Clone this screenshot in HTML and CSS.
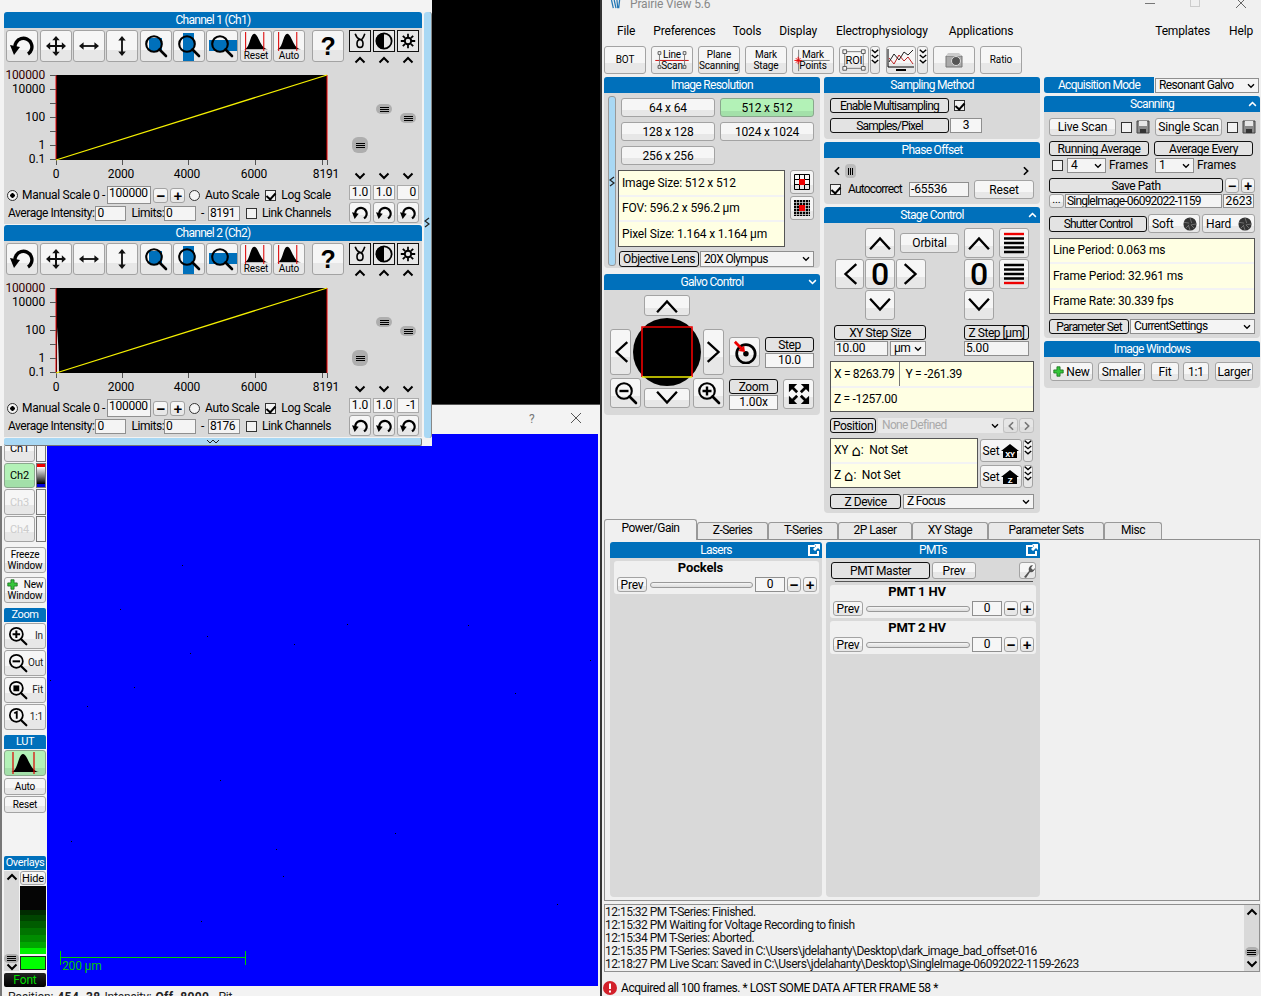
FILE: index.html
```html
<!DOCTYPE html>
<html lang="en">
<head>
<meta charset="utf-8">
<title>Prairie View 5.6</title>
<link rel="stylesheet" href="styles.css">
</head>
<body>
<svg class="defs" width="0" height="0" aria-hidden="true">
  <symbol id="rot" viewBox="0 0 24 24"><path d="M18 20a8.5 8.5 0 1 0-13-6" fill="none" stroke="#000" stroke-width="3.4"/><path d="M0 11l10 2-6 8z"/></symbol>
  <symbol id="move" viewBox="0 0 24 24"><path d="M12 2v20M2 12h20" stroke="#111" stroke-width="2.4" fill="none"/><path d="M12 0l4.500 5h-9zM12 24l4.500-5h-9zM0 12l5-4.500v9zM24 12l-5-4.500v9z" fill="#111"/></symbol>
  <symbol id="lr" viewBox="0 0 24 24"><path d="M3 12h18" stroke="#111" stroke-width="2.200"/><path d="M0 12l5.500-4.500v9zM24 12l-5.500-4.500v9z" fill="#111"/></symbol>
  <symbol id="ud" viewBox="0 0 24 24"><path d="M12 3v18" stroke="#111" stroke-width="2.200"/><path d="M12 0l4.500 5.500h-9zM12 24l4.500-5.500h-9z" fill="#111"/></symbol>
  <symbol id="lens" viewBox="0 0 24 24"><circle cx="10" cy="10" r="7.800" fill="none" stroke="#000" stroke-width="2.100"/><path d="M15.500 15.500l6.500 6.500" stroke="#000" stroke-width="2.600" stroke-linecap="round"/></symbol>
  <symbol id="zin" viewBox="0 0 24 24"><use href="#lens"/><path d="M5.500 10h9M10 5.500v9" stroke="#000" stroke-width="2.400"/></symbol>
  <symbol id="zout" viewBox="0 0 24 24"><use href="#lens"/><path d="M5.500 10h9" stroke="#000" stroke-width="2.400"/></symbol>
  <symbol id="zfit" viewBox="0 0 24 24"><use href="#lens"/><rect x="6.500" y="6.500" width="7" height="7"/></symbol>
  <symbol id="z11" viewBox="0 0 24 24"><use href="#lens"/><path d="M7.500 7.500l3-1.500v8" fill="none" stroke="#000" stroke-width="2.200"/></symbol>
  <symbol id="hist" viewBox="0 0 30 22"><path d="M1 20C8 20 8 2 13 2s7 18 16 18z"/><path d="M3 0v22M24 0v22" stroke="#d00" stroke-width="1.200"/></symbol>
  <symbol id="gam" viewBox="0 0 20 20"><path d="M4 1c2 6 4 6 6 7s4-1 6-7M10 8c-5 1-5 10 0 10s5-9 0-10z" fill="none" stroke="#000" stroke-width="2"/></symbol>
  <symbol id="half" viewBox="0 0 20 20"><circle cx="10" cy="10" r="8.500" fill="none" stroke="#000" stroke-width="2"/><path d="M10 1a9 9 0 0 0 0 18z"/></symbol>
  <symbol id="sun" viewBox="0 0 20 20"><circle cx="10" cy="10" r="4" fill="none" stroke="#000" stroke-width="2.400"/><path d="M10 1v4M10 15v4M1 10h4M15 10h4M3.500 3.500l3 3M13.500 13.500l3 3M16.500 3.500l-3 3M6.500 13.500l-3 3" stroke="#000" stroke-width="2.200"/></symbol>
  <symbol id="cu" viewBox="0 0 12 8"><path d="M1.500 6.500L6 2l4.500 4.500" fill="none" stroke="#000" stroke-width="2"/></symbol>
  <symbol id="cd" viewBox="0 0 12 8"><path d="M1.500 1.500L6 6l4.500-4.500" fill="none" stroke="#000" stroke-width="2"/></symbol>
  <symbol id="cl" viewBox="0 0 8 12"><path d="M6.500 1.500L2 6l4.500 4.500" fill="none" stroke="#000" stroke-width="2"/></symbol>
  <symbol id="cr" viewBox="0 0 8 12"><path d="M1.500 1.500L6 6l-4.500 4.500" fill="none" stroke="#000" stroke-width="2"/></symbol>
  <symbol id="big-u" viewBox="0 0 28 20"><path d="M3 17L14 5l11 12" fill="none" stroke="#000" stroke-width="2.600"/></symbol>
  <symbol id="big-d" viewBox="0 0 28 20"><path d="M3 3l11 12L25 3" fill="none" stroke="#000" stroke-width="2.600"/></symbol>
  <symbol id="big-l" viewBox="0 0 20 28"><path d="M17 3L5 14l12 11" fill="none" stroke="#000" stroke-width="2.600"/></symbol>
  <symbol id="big-r" viewBox="0 0 20 28"><path d="M3 3l12 11L3 25" fill="none" stroke="#000" stroke-width="2.600"/></symbol>
  <symbol id="lines-t" viewBox="0 0 24 24"><path d="M2 3h20" stroke="#e00" stroke-width="2.400"/><path d="M2 7.500h20M2 12h20M2 16.500h20M2 21h20" stroke="#000" stroke-width="2.400"/></symbol>
  <symbol id="lines-b" viewBox="0 0 24 24"><path d="M2 3h20M2 7.500h20M2 12h20M2 16.500h20" stroke="#000" stroke-width="2.400"/><path d="M2 21h20" stroke="#e00" stroke-width="2.400"/></symbol>
  <symbol id="tri" viewBox="0 0 10 26"><path d="M1.500 2L5 5l3.500-3M1.500 7.500L5 10.500l3.500-3M1.500 13L5 16l3.500-3" fill="none" stroke="#000" stroke-width="1.500"/></symbol>
  <symbol id="plus" viewBox="0 0 14 14"><path d="M5 1h4v4h4v4H9v4H5V9H1V5h4z" fill="#35c63a" stroke="#1a6d1d"/></symbol>
  <symbol id="save" viewBox="0 0 14 14"><path d="M1 1h12v12H1z" fill="#8a8a8a" stroke="#444"/><path d="M3 1h8v5H3z" fill="#e6e6e6"/><path d="M4 9h6v4H4z" fill="#333"/></symbol>
  <symbol id="shut" viewBox="0 0 16 16"><circle cx="8" cy="8" r="7.500" fill="#333"/><path d="M8 1l2 6M15 8l-6 1M8 15L6 9M1 6l6 1M3 13l4-4M13 13L9 9" stroke="#777" fill="none"/></symbol>
  <symbol id="grid1" viewBox="0 0 16 16"><path d="M.5.500h15v15H.500zM5.500.500v15M10.500.500v15M.500 5.500h15M.500 10.500h15" fill="none" stroke="#000"/><rect x="5" y="5" width="6" height="6" fill="#e00"/></symbol>
  <symbol id="grid2" viewBox="0 0 16 16"><rect width="16" height="16"/><path d="M2.500 0v16M5.500 0v16M8.500 0v16M11.500 0v16M14.500 0v16M0 2.500h16M0 5.500h16M0 8.500h16M0 11.500h16M0 14.500h16" stroke="#ddd" stroke-width=".7"/><rect x="5" y="5" width="6" height="6" fill="#e00"/></symbol>
  <symbol id="full" viewBox="0 0 24 24"><path d="M1 1h9L1 10zM23 1v9l-9-9zM1 23v-9l9 9zM23 23h-9l9-9z"/><path d="M4 4l6 6M20 4l-6 6M4 20l6-6M20 20l-6-6" stroke="#000" stroke-width="3"/></symbol>
  <symbol id="target" viewBox="0 0 26 26"><circle cx="14" cy="15" r="10" fill="none" stroke="#000" stroke-width="3"/><circle cx="14" cy="15" r="3"/><path d="M2 2l9 9" stroke="#e00" stroke-width="3"/><path d="M13 13l-1-7-6 6z" fill="#e00"/></symbol>
  <symbol id="wrench" viewBox="0 0 14 14"><path d="M3 13l5-6c-1-3 1-6 4-6l-2 3 2 2 2-2c0 3-3 5-5 4l-4 6z" fill="#555"/></symbol>
  <symbol id="pop" viewBox="0 0 14 14"><path d="M1 2h7v2H3v7h7V8h2v5H1z" fill="#fff"/><path d="M7 1h6v6l-2-2-3 3-2-2 3-3z" fill="#fff"/></symbol>
  <symbol id="cdw" viewBox="0 0 12 8"><path d="M1.500 1.500L6 6l4.500-4.500" fill="none" stroke="#fff" stroke-width="2"/></symbol>
  <symbol id="cuw" viewBox="0 0 12 8"><path d="M1.500 6.500L6 2l4.500 4.500" fill="none" stroke="#fff" stroke-width="2"/></symbol>
</svg>

<div class="desk">
  <section class="imgwin">
    <div class="wintitle"><span class="wq">?</span><svg class="wx" viewBox="0 0 10 10"><path d="M0 0l10 10M10 0L0 10" stroke="#555" fill="none"/></svg></div>
    <div class="imgbody">
      <aside class="tools">
        <div class="chrow h28"><div class="btn t11 flat w31 ch1">Ch1</div><div class="swatch"></div></div>
        <div class="chrow h25"><div class="btn t11 on w31">Ch2</div><div class="swatch lut"></div></div>
        <div class="chrow h26 off"><div class="btn t11 w31">Ch3</div><div class="swatch"></div></div>
        <div class="chrow h26 off"><div class="btn t11 w31">Ch4</div><div class="swatch"></div></div>
        <div class="btn t10 tw mt4 h26 stack"><span>Freeze</span><span>Window</span></div>
        <div class="btn t10 tw mt4 h26 stack"><span class="newl"><svg class="i11"><use href="#plus"/></svg>New</span><span>Window</span></div>
        <div class="thead mt5">Zoom</div>
        <div class="btn tw h26 zbtn mt1"><svg class="i20"><use href="#zin"/></svg><span>In</span></div>
        <div class="btn tw h26 zbtn mt1"><svg class="i20"><use href="#zout"/></svg><span>Out</span></div>
        <div class="btn tw h26 zbtn mt1"><svg class="i20"><use href="#zfit"/></svg><span>Fit</span></div>
        <div class="btn tw h26 zbtn mt1"><svg class="i20"><use href="#z11"/></svg><span>1:1</span></div>
        <div class="thead mt5">LUT</div>
        <div class="btn on tw h26 mt1"><svg class="lutic"><use href="#hist"/></svg></div>
        <div class="btn t10 tw h17 mt2">Auto</div>
        <div class="btn t10 tw h17 mt1">Reset</div>
        <div class="thead over">Overlays</div>
        <div class="ovl">
          <div class="ovbar">
            <svg class="i9 ovup"><use href="#cu"/></svg>
            <div class="thumb tsm ovthumb"><i></i><i></i><i></i></div>
            <svg class="i9"><use href="#cd"/></svg>
          </div>
          <div class="ovcol">
            <div class="btn t11 hide">Hide</div>
            <div class="ramp"></div>
            <div class="grn"></div>
          </div>
        </div>
        <div class="fontbtn">Font</div>
      </aside>
      <div class="canvas">
        <svg class="specks" viewBox="0 0 551 552"><path d="M135 131h1v1h-1zM73 175h1v1h-1zM160 202h1v1h-1zM247 210h1v1h-1zM143 219h1v1h-1zM3 246h1v1H3zM87 253h1v1h-1zM40 272h1v1h-1zM173 346h1v1h-1zM24 407h1v1h-1zM229 415h1v1h-1zM236 442h1v1h-1zM154 487h1v1h-1zM468 259h1v1h-1zM421 191h1v1h-1zM348 399h1v1h-1zM543 226h1v1h-1zM300 190h1v1h-1zM510 470h1v1h-1z" fill="#000"/></svg>
        <div class="scalebar"><span>200 µm</span></div>
      </div>
    </div>
    <div class="imgstatus"><span>Position:</span><b>454, 38</b><span>Intensity:</span><b>Off, 8000</b><span class="pit">Pit</span></div>
  </section>

  <section class="chanwin">
    <div class="chanmain">
      <article class="chan">
        <div class="phead">Channel 1 (Ch1)</div>
        <div class="chbody">
          <div class="chleft">
            <div class="tb">
              <div class="btn b32"><svg class="i24"><use href="#rot"/></svg></div>
              <div class="btn b32 ml1"><svg class="i20"><use href="#move"/></svg></div>
              <div class="btn b32"><svg class="i20"><use href="#lr"/></svg></div>
              <div class="btn b32"><svg class="i20"><use href="#ud"/></svg></div>
              <div class="btn b32 zs sq ml1"><svg class="i24"><use href="#lens"/></svg></div>
              <div class="btn b32 zs vb"><svg class="i24"><use href="#lens"/></svg></div>
              <div class="btn b32 zs hb"><svg class="i24"><use href="#lens"/></svg></div>
              <div class="btn b32 histb ml1"><svg class="i-h"><use href="#hist"/></svg><span>Reset</span></div>
              <div class="btn b32 histb"><svg class="i-h"><use href="#hist"/></svg><span>Auto</span></div>
              <div class="btn b32 qbtn ml6">?</div>
            </div>
            <svg class="plot" viewBox="0 0 345 124">
              <rect x="52" y="13" width="271" height="85"/>
              <path d="M52 13v85M323 13v85" stroke="#e00" fill="none"/>
              <path d="M46 13.500h6M46 27.500h6M46 41.500h6M46 55.500h6M46 69.500h6M46 83.500h6M46 97.500h6M52.500 98v5M118.500 98v5M184.500 98v5M251.500 98v5M318.500 98v5M323.500 98v5" stroke="#555" fill="none"/>
              <path d="M52 98L323 13" stroke="#f5f000" stroke-width="1.300"/>
              <g class="ylab"><text x="41" y="17">100000</text><text x="41" y="31">10000</text><text x="41" y="59">100</text><text x="41" y="87">1</text><text x="41" y="101">0.1</text></g>
              <g class="xlab"><text x="52" y="116">0</text><text x="117" y="116">2000</text><text x="183" y="116">4000</text><text x="250" y="116">6000</text><text x="322" y="116">8191</text></g>
            </svg>
            <div class="ctlrow r1">
              <span class="radio sel ml3"></span><span class="ml4">Manual Scale 0 -</span>
              <span class="inp w44 ml2 h18">100000</span>
              <div class="btn pm ml2">−</div><div class="btn pm ml2">+</div>
              <span class="radio ml4"></span><span class="ml5">Auto Scale</span>
              <span class="cb chk ml6"></span><span class="ml5">Log Scale</span>
            </div>
            <div class="ctlrow r2">
              <span class="ml4">Average Intensity:</span><span class="inp w31 ml1 h15">0</span>
              <span class="ml5">Limits:</span><span class="inp w32 h15">0</span>
              <span class="ml5">-</span><span class="inp w32 ml4 h15">8191</span>
              <span class="cb ml6"></span><span class="ml5">Link Channels</span>
            </div>
          </div>
          <div class="chright">
            <div class="mix">
              <div class="mbox"><svg class="i16"><use href="#gam"/></svg></div>
              <svg class="i12 arr"><use href="#cu"/></svg>
              <div class="track"><div class="thumb tbig t1"><i></i><i></i><i></i></div></div>
              <svg class="i12 arr"><use href="#cd"/></svg>
              <span class="mval">1.0</span>
              <div class="btn mrot"><svg class="i16"><use href="#rot"/></svg></div>
            </div>
            <div class="mix">
              <div class="mbox"><svg class="i18"><use href="#half"/></svg></div>
              <svg class="i12 arr"><use href="#cu"/></svg>
              <div class="track"><div class="thumb t2"><i></i><i></i><i></i></div></div>
              <svg class="i12 arr"><use href="#cd"/></svg>
              <span class="mval">1.0</span>
              <div class="btn mrot"><svg class="i16"><use href="#rot"/></svg></div>
            </div>
            <div class="mix">
              <div class="mbox"><svg class="i16"><use href="#sun"/></svg></div>
              <svg class="i12 arr"><use href="#cu"/></svg>
              <div class="track"><div class="thumb t3"><i></i><i></i><i></i></div></div>
              <svg class="i12 arr"><use href="#cd"/></svg>
              <span class="mval">0</span>
              <div class="btn mrot"><svg class="i16"><use href="#rot"/></svg></div>
            </div>
          </div>
        </div>
      </article>
      <article class="chan ch2">
        <div class="phead">Channel 2 (Ch2)</div>
        <div class="chbody">
          <div class="chleft">
            <div class="tb">
              <div class="btn b32"><svg class="i24"><use href="#rot"/></svg></div>
              <div class="btn b32 ml1"><svg class="i20"><use href="#move"/></svg></div>
              <div class="btn b32"><svg class="i20"><use href="#lr"/></svg></div>
              <div class="btn b32"><svg class="i20"><use href="#ud"/></svg></div>
              <div class="btn b32 zs sq ml1"><svg class="i24"><use href="#lens"/></svg></div>
              <div class="btn b32 zs vb"><svg class="i24"><use href="#lens"/></svg></div>
              <div class="btn b32 zs hb"><svg class="i24"><use href="#lens"/></svg></div>
              <div class="btn b32 histb ml1"><svg class="i-h"><use href="#hist"/></svg><span>Reset</span></div>
              <div class="btn b32 histb"><svg class="i-h"><use href="#hist"/></svg><span>Auto</span></div>
              <div class="btn b32 qbtn ml6">?</div>
            </div>
            <svg class="plot" viewBox="0 0 345 124">
              <rect x="52" y="13" width="271" height="85"/>
              <path d="M52 13v85M323 13v85" stroke="#e00" fill="none"/>
              <path d="M46 13.500h6M46 27.500h6M46 41.500h6M46 55.500h6M46 69.500h6M46 83.500h6M46 97.500h6M52.500 98v5M118.500 98v5M184.500 98v5M251.500 98v5M318.500 98v5M323.500 98v5" stroke="#555" fill="none"/>
              <path d="M53 98V52c1 14 2 28 2 46z" fill="#ddd"/>
              <path d="M52 98L323 13" stroke="#f5f000" stroke-width="1.300"/>
              <g class="ylab"><text x="41" y="17">100000</text><text x="41" y="31">10000</text><text x="41" y="59">100</text><text x="41" y="87">1</text><text x="41" y="101">0.1</text></g>
              <g class="xlab"><text x="52" y="116">0</text><text x="117" y="116">2000</text><text x="183" y="116">4000</text><text x="250" y="116">6000</text><text x="322" y="116">8191</text></g>
            </svg>
            <div class="ctlrow r1">
              <span class="radio sel ml3"></span><span class="ml4">Manual Scale 0 -</span>
              <span class="inp w44 ml2 h18">100000</span>
              <div class="btn pm ml2">−</div><div class="btn pm ml2">+</div>
              <span class="radio ml4"></span><span class="ml5">Auto Scale</span>
              <span class="cb chk ml6"></span><span class="ml5">Log Scale</span>
            </div>
            <div class="ctlrow r2">
              <span class="ml4">Average Intensity:</span><span class="inp w31 ml1 h15">0</span>
              <span class="ml5">Limits:</span><span class="inp w32 h15">0</span>
              <span class="ml5">-</span><span class="inp w32 ml4 h15">8176</span>
              <span class="cb ml6"></span><span class="ml5">Link Channels</span>
            </div>
          </div>
          <div class="chright">
            <div class="mix">
              <div class="mbox"><svg class="i16"><use href="#gam"/></svg></div>
              <svg class="i12 arr"><use href="#cu"/></svg>
              <div class="track"><div class="thumb tbig t1"><i></i><i></i><i></i></div></div>
              <svg class="i12 arr"><use href="#cd"/></svg>
              <span class="mval">1.0</span>
              <div class="btn mrot"><svg class="i16"><use href="#rot"/></svg></div>
            </div>
            <div class="mix">
              <div class="mbox"><svg class="i18"><use href="#half"/></svg></div>
              <svg class="i12 arr"><use href="#cu"/></svg>
              <div class="track"><div class="thumb t2"><i></i><i></i><i></i></div></div>
              <svg class="i12 arr"><use href="#cd"/></svg>
              <span class="mval">1.0</span>
              <div class="btn mrot"><svg class="i16"><use href="#rot"/></svg></div>
            </div>
            <div class="mix">
              <div class="mbox"><svg class="i16"><use href="#sun"/></svg></div>
              <svg class="i12 arr"><use href="#cu"/></svg>
              <div class="track"><div class="thumb t3"><i></i><i></i><i></i></div></div>
              <svg class="i12 arr"><use href="#cd"/></svg>
              <span class="mval">-1</span>
              <div class="btn mrot"><svg class="i16"><use href="#rot"/></svg></div>
            </div>
          </div>
        </div>
      </article>
      <div class="collapse"><svg viewBox="0 0 14 6" class="colic"><path d="M1 1l3 3 3-3 3 3 3-3" fill="none" stroke="#222"/></svg></div>
    </div>
    <div class="chscroll"><svg viewBox="0 0 6 12" class="scic"><path d="M5 1L1 4l4 3L1 10" fill="none" stroke="#222" stroke-width="1.200"/></svg></div>
  </section>

  <main class="app">
    <header class="title">
      <svg class="logo" viewBox="0 0 12 10"><path d="M1 0l2 9M4 0l2 9M7 0l1 9M10 0l-1 9" stroke="#2478b5" stroke-width="1.400"/></svg>
      <span class="ttext">Prairie View 5.6</span>
      <span class="wctl"><i class="wmin"></i><i class="wmax"></i><svg class="wclose" viewBox="0 0 10 10"><path d="M0 0l10 10M10 0L0 10" stroke="#666" fill="none"/></svg></span>
    </header>
    <nav class="menu">
      <span class="m1">File</span><span class="m2">Preferences</span><span class="m3">Tools</span><span class="m4">Display</span><span class="m5">Electrophysiology</span><span class="m6">Applications</span><span class="m7">Templates</span><span class="m8">Help</span>
    </nav>
    <div class="toolbar">
      <div class="btn w42 t10">BOT</div>
      <div class="btn w42 t10 stack ov"><svg class="tbov" viewBox="0 0 42 28"><path d="M3 14.500h36" stroke="#c00"/><path d="M6 5h3v3H6zM33 5h3v3h-3zM6 20h3v3H6zM33 20h3v3h-3z" fill="none" stroke="#555"/><path d="M7.500 8v12M34.500 8v12" stroke="#777"/></svg><span>Line</span><span>Scan</span></div>
      <div class="btn w42 t10 stack"><span>Plane</span><span>Scanning</span></div>
      <div class="btn w42 t10 stack"><span>Mark</span><span>Stage</span></div>
      <div class="btn w42 t10 stack ov"><svg class="tbov" viewBox="0 0 42 28"><path d="M6 14.500h33M5.500 3v23" stroke="#777"/><path d="M1 14.500h8M5 10.500v8M2.500 12l5 5M7.500 12l-5 5" stroke="#e00"/></svg><span>Mark</span><span>Points</span></div>
      <div class="btn w30 t11 ov"><svg class="tbov" viewBox="0 0 30 28"><path d="M5 5h20v18H5z" fill="none" stroke="#777"/><path d="M3 3h4v4H3zM23 3h4v4h-4zM3 21h4v4H3zM23 21h4v4h-4z" fill="#f3f3f3" stroke="#555"/></svg>ROI</div>
      <div class="btn w10 nm1"><svg class="i-tri"><use href="#tri"/></svg></div>
      <div class="btn w30 ml1"><svg class="chart" viewBox="0 0 28 24"><path d="M1 1v18h26" fill="none" stroke="#000"/><path d="M2 10l5 6 5-9 5 6 4-4 5 7" fill="none" stroke="#b22"/><path d="M2 14l5-8 5 6 5-8 4 3 5-5" fill="none" stroke="#222"/><path d="M9 22h10" stroke="#000" stroke-width="2"/></svg></div>
      <div class="btn w11 nm1"><svg class="i-tri"><use href="#tri"/></svg></div>
      <div class="btn w42"><svg class="cam" viewBox="0 0 18 16"><path d="M1 4h16v11H1z" fill="#aaa" stroke="#777"/><path d="M3 1h11l3 3H1z" fill="#ccc"/><circle cx="11" cy="9" r="4.500" fill="#555" stroke="#ddd"/></svg></div>
      <div class="btn w42 t10">Ratio</div>
    </div>

    <div class="cols">
      <div class="col">
        <div class="panel">
          <div class="phead">Image Resolution</div>
          <div class="pbody res">
            <div class="slimbar"><svg viewBox="0 0 6 12" class="scic2"><path d="M5 1L1 4l4 3L1 10" fill="none" stroke="#222" stroke-width="1.200"/></svg></div>
            <div class="rescontent">
              <div class="resgrid">
                <div class="btn">64 x 64</div><div class="btn on">512 x 512</div>
                <div class="btn">128 x 128</div><div class="btn">1024 x 1024</div>
                <div class="btn">256 x 256</div>
              </div>
              <div class="infoline">
                <div class="info w167">
                  <div>Image Size: 512 x 512</div><div>FOV: 596.2 x 596.2 µm</div><div>Pixel Size: 1.164 x 1.164 µm</div>
                </div>
                <div class="gridbtns">
                  <div class="btn"><svg class="i16"><use href="#grid1"/></svg></div>
                  <div class="btn"><svg class="i16"><use href="#grid2"/></svg></div>
                </div>
              </div>
              <div class="objline">
                <span class="lab w80">Objective Lens</span>
                <span class="sel2 w114">20X Olympus<svg class="car"><use href="#cd"/></svg></span>
              </div>
            </div>
          </div>
        </div>
        <div class="panel mt6">
          <div class="phead">Galvo Control<svg class="hcar"><use href="#cdw"/></svg></div>
          <div class="pbody galvo">
            <div class="gleft">
              <div class="gr1"><div class="btn gv"><svg class="i-bigw"><use href="#big-u"/></svg></div></div>
              <div class="gr2">
                <div class="btn gh"><svg class="i-bigh"><use href="#big-l"/></svg></div>
                <svg class="fov" viewBox="0 0 68 68"><circle cx="34" cy="34" r="34"/><path d="M9 59V9h50v50" fill="none" stroke="#e00" stroke-width="1.600"/><path d="M9 59h50" stroke="#ee0" stroke-width="1.600"/></svg>
                <div class="btn gh"><svg class="i-bigh"><use href="#big-r"/></svg></div>
              </div>
              <div class="gr3">
                <div class="btn gz"><svg class="i24"><use href="#zout"/></svg></div>
                <div class="btn gv gdown"><svg class="i-bigw"><use href="#big-d"/></svg></div>
                <div class="btn gz"><svg class="i24"><use href="#zin"/></svg></div>
              </div>
            </div>
            <div class="gright">
              <div class="gs1">
                <div class="btn gz2"><svg class="i24"><use href="#target"/></svg></div>
                <div class="gstack"><span class="lab h15">Step</span><span class="val">10.0</span></div>
              </div>
              <div class="gs2">
                <div class="gstack"><span class="lab h15">Zoom</span><span class="val">1.00x</span></div>
                <div class="btn gz"><svg class="i22"><use href="#full"/></svg></div>
              </div>
            </div>
          </div>
        </div>
      </div>

      <div class="col">
        <div class="panel">
          <div class="phead">Sampling Method</div>
          <div class="pbody samp">
            <div class="row"><span class="lab tight w119 h15">Enable Multisampling</span><span class="cb chk ml5"></span></div>
            <div class="row mt5"><span class="lab tight w119 h15">Samples/Pixel</span><span class="val w32 ml1">3</span></div>
          </div>
        </div>
        <div class="panel mt3">
          <div class="phead">Phase Offset</div>
          <div class="pbody phase">
            <div class="hscroll"><svg class="i-hs"><use href="#cl"/></svg><div class="vthumb"><i></i><i></i><i></i></div><svg class="i-hs rgt"><use href="#cr"/></svg></div>
            <div class="row phrow"><span class="cb chk"></span><span class="ml7 w54 tight">Autocorrect</span><span class="inp w60 ml7 h15">-65536</span><div class="btn w60 h19 ml5">Reset</div></div>
          </div>
        </div>
        <div class="panel mt3">
          <div class="phead">Stage Control<svg class="hcar"><use href="#cuw"/></svg></div>
          <div class="pbody stage">
            <div class="padrow">
              <div class="xy">
                <span></span><div class="btn"><svg class="i-bigw"><use href="#big-u"/></svg></div><div class="btn orb">Orbital</div>
                <div class="btn"><svg class="i-bigh"><use href="#big-l"/></svg></div><div class="btn zero">0</div><div class="btn"><svg class="i-bigh"><use href="#big-r"/></svg></div>
                <span></span><div class="btn"><svg class="i-bigw"><use href="#big-d"/></svg></div><span></span>
              </div>
              <div class="zz">
                <div class="btn"><svg class="i-bigw"><use href="#big-u"/></svg></div><div class="btn"><svg class="i24"><use href="#lines-t"/></svg></div>
                <div class="btn zero">0</div><div class="btn"><svg class="i24"><use href="#lines-b"/></svg></div>
                <div class="btn"><svg class="i-bigw"><use href="#big-d"/></svg></div>
              </div>
            </div>
            <div class="steps">
              <div class="stepa"><span class="lab h15">XY Step Size</span><div class="row mt1"><span class="inp w54 h15 big">10.00</span><span class="sel2 w36 ml2 h15">µm<svg class="car"><use href="#cd"/></svg></span></div></div>
              <div class="stepb"><span class="lab h15">Z Step [µm]</span><span class="inp h15 mt1 big">5.00</span></div>
            </div>
            <div class="info pos">
              <div class="xyrow"><span>X = 8263.79</span><span class="vsep"></span><span>Y = -261.39</span></div>
              <div class="zrow">Z = -1257.00</div>
            </div>
            <div class="row posrow"><span class="lab w46 h15">Position</span><span class="sel2 dis ml2 w125 h15">None Defined<svg class="car"><use href="#cd"/></svg></span><div class="btn dis2 w15 h15"><svg class="i-hs"><use href="#cl"/></svg></div><div class="btn dis2 w15 h15 ml1"><svg class="i-hs"><use href="#cr"/></svg></div></div>
            <div class="row homerow">
              <div class="info w148">
                <div>XY<span class="hs">⌂</span>:&nbsp; Not Set</div><div>Z<span class="hs">⌂</span>:&nbsp; Not Set</div>
              </div>
              <div class="setcol">
                <div class="setrow"><div class="btn setb">Set<svg class="hm" viewBox="0 0 18 14"><path d="M9 0l9 7h-2v7H2V7H0z"/><text x="9" y="13" class="hmt">XY</text></svg></div><div class="btn w10"><svg class="i-tri"><use href="#tri"/></svg></div></div>
                <div class="setrow"><div class="btn setb">Set<svg class="hm" viewBox="0 0 18 14"><path d="M9 0l9 7h-2v7H2V7H0z"/><text x="9" y="13" class="hmt">Z</text></svg></div><div class="btn w10"><svg class="i-tri"><use href="#tri"/></svg></div></div>
              </div>
            </div>
            <div class="row devrow"><span class="lab w71 h15">Z Device</span><span class="sel2 w131 ml2 h15">Z Focus<svg class="car"><use href="#cd"/></svg></span></div>
          </div>
        </div>
      </div>

      <div class="col">
        <div class="acq"><span class="phead acqh">Acquisition Mode</span><span class="sel2 w104 acqs">Resonant Galvo<svg class="car"><use href="#cd"/></svg></span></div>
        <div class="panel mt3">
          <div class="phead">Scanning<svg class="hcar"><use href="#cuw"/></svg></div>
          <div class="pbody scan">
            <div class="row r18">
              <div class="btn w67 h18">Live Scan</div><span class="cb ml5"></span><svg class="i14 ml4"><use href="#save"/></svg>
              <div class="btn w67 h18 ml5">Single Scan</div><span class="cb ml5"></span><svg class="i14 ml4"><use href="#save"/></svg>
            </div>
            <div class="row mt5"><span class="lab w100 h15">Running Average</span><span class="lab w99 h15 ml5">Average Every</span></div>
            <div class="row mt2 fr">
              <span class="cb ml3"></span><span class="sel2 w39 ml4 h15">4<svg class="car"><use href="#cd"/></svg></span><span class="ml3 w46">Frames</span>
              <span class="sel2 w39 h15">1<svg class="car"><use href="#cd"/></svg></span><span class="ml3">Frames</span>
            </div>
            <div class="row pathh">
              <span class="lab w174 h15">Save Path</span><div class="btn pm2 ml2">−</div><div class="btn pm2 ml2">+</div>
            </div>
            <div class="row mt1">
              <div class="btn w15 h14 dots">...</div><span class="inp w157 ml1 h14 tight">SingleImage-06092022-1159</span><span class="inp w31 ml1 h14 rt">2623</span>
            </div>
            <div class="row shut">
              <span class="lab tight w98 h16">Shutter Control</span>
              <div class="btn shb w52 ml1">Soft<svg class="i14"><use href="#shut"/></svg></div>
              <div class="btn shb w53 ml2">Hard<svg class="i14"><use href="#shut"/></svg></div>
            </div>
            <div class="info w206 tim">
              <div>Line Period: 0.063 ms</div><div>Frame Period: 32.961 ms</div><div>Frame Rate: 30.339 fps</div>
            </div>
            <div class="row mt5"><span class="lab tight w80 h15">Parameter Set</span><span class="sel2 w125 ml1 h15">CurrentSettings<svg class="car"><use href="#cd"/></svg></span></div>
          </div>
        </div>
        <div class="panel mt3">
          <div class="phead">Image Windows</div>
          <div class="pbody iw">
            <div class="btn w43"><svg class="i11"><use href="#plus"/></svg>New</div>
            <div class="btn w47 ml5">Smaller</div>
            <div class="btn w28 ml6">Fit</div>
            <div class="btn w26 ml4">1:1</div>
            <div class="btn w38 ml6">Larger</div>
          </div>
        </div>
      </div>
    </div>

    <div class="tabs">
      <span class="tab act w93">Power/Gain</span><span class="tab w71">Z-Series</span><span class="tab w70">T-Series</span><span class="tab w74">2P Laser</span><span class="tab w76">XY Stage</span><span class="tab w116">Parameter Sets</span><span class="tab w58">Misc</span>
    </div>
    <div class="pane">
      <div class="panel w212 full">
        <div class="phead">Lasers<svg class="popic"><use href="#pop"/></svg></div>
        <div class="card lcard">
          <div class="ctitle">Pockels</div>
          <div class="row cline"><div class="btn prev">Prev</div><div class="slider w103"></div><span class="val w30">0</span><div class="btn pm3">−</div><div class="btn pm3">+</div></div>
        </div>
      </div>
      <div class="panel w214 full">
        <div class="phead">PMTs<svg class="popic"><use href="#pop"/></svg></div>
        <div class="pmttop"><span class="lab w99 h17">PMT Master</span><div class="btn w44 h17 ml2">Prev</div><div class="btn wrb"><svg class="i14"><use href="#wrench"/></svg></div></div>
        <div class="pmtline"></div>
        <div class="card">
          <div class="ctitle">PMT 1 HV</div>
          <div class="row cline"><div class="btn prev">Prev</div><div class="slider w104"></div><span class="val w30">0</span><div class="btn pm3">−</div><div class="btn pm3">+</div></div>
        </div>
        <div class="card">
          <div class="ctitle">PMT 2 HV</div>
          <div class="row cline"><div class="btn prev">Prev</div><div class="slider w104"></div><span class="val w30">0</span><div class="btn pm3">−</div><div class="btn pm3">+</div></div>
        </div>
      </div>
    </div>
    <div class="log">
      <div class="logtext">
        <div>12:15:32 PM T-Series: Finished.</div>
        <div>12:15:32 PM Waiting for Voltage Recording to finish</div>
        <div>12:15:34 PM T-Series: Aborted.</div>
        <div>12:15:35 PM T-Series: Saved in C:\Users\jdelahanty\Desktop\dark_image_bad_offset-016</div>
        <div>12:18:27 PM Live Scan: Saved in C:\Users\jdelahanty\Desktop\SingleImage-06092022-1159-2623</div>
      </div>
      <div class="logbar"><svg class="i12"><use href="#cu"/></svg><div class="thumb tsm logthumb"><i></i><i></i><i></i></div><svg class="i12"><use href="#cd"/></svg></div>
    </div>
    <footer class="status">
      <svg class="err" viewBox="0 0 14 14"><circle cx="7" cy="7" r="7" fill="#d2202a"/><path d="M7 2.500v5.500M7 9.500v2" stroke="#fff" stroke-width="2"/></svg>
      <span>Acquired all 100 frames. * LOST SOME DATA AFTER FRAME 58 *</span>
    </footer>
  </main>
</div>
</body>
</html>
```
FILE: styles.css
```css
* { box-sizing: border-box; }
html, body { margin: 0; padding: 0; }
body {
  width: 1261px;
  height: 996px;
  overflow: hidden;
  font: 12px/1.2 Roboto, "DejaVu Sans", sans-serif;
  letter-spacing: -0.15px;
  color: #000;
  background: #000;
}
.defs { position: absolute; }
svg { display: block; flex: none; }
.desk { position: relative; width: 1261px; height: 996px; overflow: hidden; background: #000; }

/* ---- shared controls ---- */
.btn {
  display: flex;
  align-items: center;
  justify-content: center;
  flex: none;
  border: 1px solid #a3a3a3;
  border-radius: 3px;
  background: linear-gradient(#f6f6f6 0 62%, #e7e7e7 62% 100%);
  white-space: nowrap;
  line-height: 1;
}
.btn.on { background: linear-gradient(#b3f2b7 0 70%, #a3e0a9 70% 100%); border-color: #8aa88d; }
.stack { flex-direction: column; gap: 1px; }
.ov { position: relative; }
.tbov { position: absolute; inset: 0; width: 100%; height: 100%; }
.row { display: flex; align-items: center; }
.lab {
  display: flex;
  flex: none;
  align-items: center;
  justify-content: center;
  border: 1px solid #111;
  border-radius: 3px;
  background: #e3e3e3;
  white-space: nowrap;
  padding-top: 1px;
  letter-spacing: -.45px;
}
.tight { letter-spacing: -.8px; }
.inp, .val {
  display: block;
  flex: none;
  background: #f4f4f4;
  border: 1px solid #8f8f8f;
  padding: 0 1px;
  line-height: 1.1;
  white-space: nowrap;
  overflow: hidden;
}
.val { background: #f6f6f6; text-align: center; height: 15px; }
.rt { text-align: right; }
.big { font-size: 12px; }
.sel2 {
  display: flex;
  flex: none;
  align-items: center;
  justify-content: space-between;
  padding: 0 3px;
  border: 1px solid #8f8f8f;
  background: #f4f4f4;
  height: 15px;
  white-space: nowrap;
  letter-spacing: -.65px;
}
.dis { color: #aaa; background: #e9e9e9; border-color: #e9e9e9; }
.dis2 { opacity: .45; }
.car { width: 8px; height: 6px; }
.cb {
  display: block;
  flex: none;
  width: 11px;
  height: 11px;
  border: 1px solid #333;
  background: #f2f2f2;
  position: relative;
}
.cb.chk::after {
  content: "";
  position: absolute;
  left: 1.500px;
  top: 0;
  width: 4px;
  height: 7px;
  border: solid #000;
  border-width: 0 2px 2px 0;
  transform: rotate(42deg);
}
.radio {
  display: block;
  flex: none;
  width: 11px;
  height: 11px;
  border: 1px solid #333;
  border-radius: 50%;
  background: #f4f4f4;
}
.radio.sel { background: radial-gradient(circle, #000 0 2px, #f4f4f4 2.500px); }
.thumb {
  display: flex;
  flex-direction: column;
  align-items: center;
  justify-content: center;
  gap: 1px;
  width: 16px;
  height: 10px;
  border-radius: 5px;
  background: #aeaeae;
}
.thumb i { display: block; width: 9px; height: 1px; background: #000; }
.tbig { height: 16px; border-radius: 6px; }
.tsm { width: 14px; height: 10px; }

/* size helpers */
.w10 { width: 10px; } .w11 { width: 11px; } .w15 { width: 15px; } .w26 { width: 26px; } .w28 { width: 28px; } .w30 { width: 30px; }
.w31 { width: 31px; } .w32 { width: 32px; } .w36 { width: 36px; } .w38 { width: 38px; } .w39 { width: 39px; } .w42 { width: 42px; }
.w43 { width: 43px; } .w44 { width: 44px; } .w46 { width: 46px; } .w47 { width: 47px; } .w52 { width: 52px; } .w53 { width: 53px; }
.w54 { width: 54px; } .w58 { width: 58px; } .w60 { width: 60px; } .w67 { width: 67px; } .w70 { width: 70px; } .w71 { width: 71px; }
.w74 { width: 74px; } .w76 { width: 76px; } .w80 { width: 80px; } .w93 { width: 93px; } .w98 { width: 98px; } .w99 { width: 99px; }
.w100 { width: 100px; } .w103 { width: 103px; } .w104 { width: 104px; } .w114 { width: 114px; } .w116 { width: 116px; } .w119 { width: 119px; }
.w125 { width: 125px; } .w131 { width: 131px; } .w148 { width: 148px; } .w157 { width: 157px; } .w167 { width: 167px; } .w174 { width: 174px; }
.w206 { width: 206px; } .w212 { width: 212px; } .w214 { width: 214px; }
.h14 { height: 14px; } .h15 { height: 15px; } .h16 { height: 16px; } .h17 { height: 17px; } .h18 { height: 18px; } .h19 { height: 19px; }
.h25 { height: 25px; } .h26 { height: 26px; } .h28 { height: 28px; }
.ml1 { margin-left: 1px; } .ml2 { margin-left: 2px; } .ml3 { margin-left: 3px; } .ml4 { margin-left: 4px; } .ml5 { margin-left: 5px; } .ml6 { margin-left: 6px; } .ml7 { margin-left: 7px; }
.mt1 { margin-top: 1px; } .mt2 { margin-top: 2px; } .mt3 { margin-top: 3px; } .mt4 { margin-top: 4px; } .mt5 { margin-top: 5px; } .mt6 { margin-top: 6px; }
.t10 { font-size: 10px; } .t11 { font-size: 11px; }
.i9 { width: 12px; height: 8px; } .i11 { width: 11px; height: 11px; } .i12 { width: 12px; height: 8px; } .i14 { width: 14px; height: 14px; }
.i16 { width: 16px; height: 16px; } .i18 { width: 18px; height: 18px; } .i20 { width: 20px; height: 20px; } .i22 { width: 22px; height: 22px; } .i24 { width: 24px; height: 24px; }
.i-hs { width: 8px; height: 10px; }
.i-bigw { width: 26px; height: 18px; } .i-bigh { width: 18px; height: 26px; } .i-tri { width: 10px; height: 24px; }

/* ---- headers, panels ---- */
.phead {
  position: relative;
  display: block;
  height: 16px;
  background: #0070bb;
  color: #fff;
  text-align: center;
  line-height: 16px;
  border-radius: 3px 3px 0 0;
  white-space: nowrap;
  letter-spacing: -.7px;
}
.hcar { position: absolute; right: 3px; top: 5px; width: 9px; height: 6px; }
.popic { position: absolute; right: 1px; top: 1px; width: 14px; height: 14px; }
.panel { background: #d9d9d9; border-radius: 4px; }
.full { height: 355px; flex: none; }

/* ---- image window ---- */
.imgwin {
  position: absolute;
  left: 0;
  top: 404px;
  width: 600px;
  height: 592px;
  background: #f3f3f3;
  border-top: 1px solid #555;
  border-left: 2px solid #777;
}
.wintitle { position: relative; height: 29px; }
.wq { position: absolute; left: 527px; top: 7px; color: #777; font-size: 12px; }
.wx { position: absolute; left: 569px; top: 8px; width: 10px; height: 10px; }
.imgbody { display: flex; height: 553px; }
.tools { width: 45px; padding: 0 1px 0 2px; flex: none; display: flex; flex-direction: column; overflow: hidden; }
.chrow { display: flex; gap: 1px; flex: none; margin-bottom: 1px; }
.off { color: #ccc; }
.swatch { width: 10px; flex: none; background: #f3f3f3; border: 1px solid #777; }
.lut { background: linear-gradient(#e00 0 3px, #fff 3px, #777 55%, #000 85%, #00d 85%); }
.tw { width: 42px; }
.newl { display: flex; align-items: center; gap: 6px; }
.thead { height: 14px; flex: none; width: 42px; background: #0070bb; color: #fff; font-size: 11px; text-align: center; line-height: 14px; border-radius: 2px 2px 0 0; letter-spacing: -.4px; }
.zbtn { justify-content: flex-start; padding-left: 3px; font-size: 10px; color: #222; }
.zbtn span { margin-left: auto; margin-right: 2px; }
.lutic { width: 32px; height: 22px; }
.over { margin-top: 43px; }
.ovl { display: flex; height: 100px; margin-top: 1px; }
.ovbar { width: 15px; flex: none; background: #d9d9d9; display: flex; flex-direction: column; align-items: center; }
.ovup { margin-top: 2px; }
.ovthumb { margin-top: auto; width: 15px; height: 9px; }
.ovcol { margin-left: 1px; width: 26px; flex: none; }
.hide { height: 14px; }
.ramp { height: 68px; margin-top: 1px; background: linear-gradient(#050505 0 35%, #002c00 35% 43%, #004400 43% 52%, #005c00 52% 62%, #007400 62% 72%, #008c00 72% 82%, #00a800 82% 91%, #00f000 91%); }
.grn { height: 14px; margin-top: 2px; background: #0f0; border: 1px solid #222; }
.fontbtn { margin-top: 2px; height: 14px; width: 42px; background: linear-gradient(#222, #000); color: #0d0; text-align: center; line-height: 14px; border-radius: 2px; flex: none; }
.canvas { position: relative; width: 551px; height: 552px; background: #00f; flex: none; }
.specks { position: absolute; inset: 0; width: 100%; height: 100%; }
.scalebar { position: absolute; left: 13px; top: 517px; width: 186px; height: 14px; border-left: 1px solid #0c0; border-right: 1px solid #0c0; }
.scalebar::before { content: ""; position: absolute; left: 0; right: 0; top: 0; height: 1px; margin-top: 6px; background: #0c0; }
.scalebar span { position: absolute; left: 1px; top: 8px; color: #0c0; font-size: 12px; white-space: nowrap; }
.imgstatus { display: flex; gap: 4px; padding-left: 6px; height: 10px; line-height: 20px; overflow: hidden; color: #222; }
.imgstatus b { letter-spacing: .4px; }
.pit { margin-left: 5px; }

/* ---- channel window ---- */
.chanwin { position: absolute; left: 0; top: 0; width: 432px; height: 446px; background: #f3f3f3; display: flex; padding: 12px 0 0 4px; }
.chanmain { width: 418px; flex: none; }
.chan { width: 418px; }
.ch2 { margin-top: 1px; }
.chbody { display: flex; height: 196px; background: #d9d9d9; }
.chleft { width: 345px; flex: none; }
.tb { display: flex; gap: 1px; padding: 2px 0 0 2px; height: 34px; }
.b32 { width: 32px; height: 32px; }
.zs svg { position: relative; }
.sq { background: radial-gradient(#0070bb 0 0) 8px 7px/13px 13px no-repeat, linear-gradient(#f6f6f6 0 62%, #e7e7e7 62%); }
.vb { background: radial-gradient(#0070bb 0 0) 9px 2px/11px 28px no-repeat, linear-gradient(#f6f6f6 0 62%, #e7e7e7 62%); }
.hb { background: radial-gradient(#0070bb 0 0) 2px 9px/28px 11px no-repeat, linear-gradient(#f6f6f6 0 62%, #e7e7e7 62%); }
.histb { flex-direction: column; font-size: 10px; }
.i-h { width: 28px; height: 19px; }
.qbtn { font: bold 25px/1 "Liberation Sans", sans-serif; }
.plot { width: 345px; height: 124px; }
.ylab text { text-anchor: end; font-size: 12px; letter-spacing: -.15px; }
.xlab text { text-anchor: middle; font-size: 12px; letter-spacing: -.15px; }
.ylab text:first-child { fill: #300; }
.ctlrow { display: flex; align-items: center; white-space: nowrap; }
.r1 { height: 18px; letter-spacing: -.3px; }
.r2 { height: 18px; letter-spacing: -.45px; }
.pm { width: 15px; height: 15px; font: bold 15px/1 "Liberation Sans", sans-serif; }
.chright { display: flex; gap: 2px; padding-left: 0; width: 70px; }
.mix { width: 22px; flex: none; display: flex; flex-direction: column; align-items: center; padding-top: 2px; }
.mbox { width: 22px; height: 22px; border: 1px solid #111; background: #e7e7e7; display: flex; align-items: center; justify-content: center; flex: none; }
.arr { margin-top: 4px; flex: none; }
.track { height: 104px; width: 22px; flex: none; display: flex; justify-content: center; }
.t1 { margin-top: 73px; }
.t2 { margin-top: 40px; }
.t3 { margin-top: 49px; }
.mval { width: 22px; height: 15px; background: #f6f6f6; border: 1px solid #aaa; text-align: right; padding-right: 2px; margin-top: 5px; line-height: 13px; flex: none; }
.mrot { width: 22px; height: 21px; margin-top: 2px; }
.collapse { margin-top: 1px; height: 8px; width: 418px; background: #a9d8f4; border-radius: 2px; display: flex; justify-content: center; align-items: center; border-right: 1px solid #777; border-bottom: 1px solid #777; }
.colic { width: 14px; height: 6px; }
.chscroll { margin-left: 2px; width: 8px; height: 426px; background: #a9d8f4; border-radius: 3px; position: relative; border-right: 1px solid #888; }
.scic { position: absolute; left: 0; top: 205px; width: 6px; height: 12px; }

/* ---- main app ---- */
.app { position: absolute; left: 600px; top: 0; width: 661px; height: 996px; background: #f0f0f0; border-left: 2px solid #333; padding: 0 1px 0 2px; }
.title { position: relative; display: flex; height: 22px; line-height: 8px; color: #888; }
.logo { width: 12px; height: 9px; margin: 0 0 0 6px; }
.ttext { margin-left: 8px; }
.wctl i { position: absolute; display: block; }
.wmin { left: 541px; top: 3px; width: 10px; height: 1px; background: #777; }
.wmax { left: 586px; top: -3px; width: 10px; height: 10px; border: 1px solid #ccc; }
.wclose { position: absolute; left: 632px; top: -2px; width: 10px; height: 10px; }
.menu { display: flex; height: 18px; align-items: center; white-space: nowrap; position: relative; }
.m1 { margin-left: 13px; } .m2 { margin-left: 18px; } .m3 { margin-left: 17px; } .m4 { margin-left: 18px; } .m5 { margin-left: 19px; } .m6 { margin-left: 21px; }
.m7 { margin-left: auto; } .m8 { margin-left: 19px; margin-right: 7px; }
.toolbar { display: flex; gap: 5px; height: 28px; margin-top: 6px; }
.toolbar .btn { height: 28px; }
.nm1 { margin-left: -4px; }
.chart { width: 28px; height: 24px; }
.cam { width: 18px; height: 16px; }
.cols { display: flex; gap: 4px; height: 442px; margin-top: 3px; }
.col { width: 216px; flex: none; }
.res { display: flex; height: 175px; padding: 3px 0 0 4px; }
.slimbar { position: relative; width: 8px; height: 170px; background: #a9d8f4; border: 1px solid #999; border-radius: 3px; flex: none; }
.scic2 { position: absolute; left: 0; top: 79px; width: 6px; height: 12px; }
.rescontent { margin-left: 2px; width: 196px; }
.resgrid { display: grid; grid-template-columns: 94px 94px; grid-auto-rows: 19px; gap: 5px; padding: 2px 0 0 3px; }
.infoline { display: flex; margin-top: 5px; height: 77px; }
.info { display: flex; flex-direction: column; background: #ffffe3; border: 1px solid #555; flex: none; }
.info > div { flex: 1; display: flex; align-items: center; padding-left: 3px; }
.info > div + div { border-top: 2px solid #f3f3f3; }
.gridbtns { margin-left: 5px; display: flex; flex-direction: column; gap: 2px; }
.gridbtns .btn { width: 24px; height: 24px; }
.objline { display: flex; margin-top: 4px; margin-left: 1px; }
.objline .lab { height: 16px; }
.objline .sel2 { margin-left: 1px; height: 16px; }
.galvo { display: flex; height: 125px; padding: 5px 0 0 6px; }
.gleft { width: 114px; flex: none; }
.gr1 { display: flex; justify-content: center; }
.gv { width: 46px; height: 21px; }
.gr2 { display: flex; height: 62px; justify-content: space-between; margin-top: 0; align-items: flex-start; position: relative; }
.gh { width: 21px; height: 46px; margin-top: 13px; }
.fov { width: 68px; height: 68px; margin-top: 2px; margin-left: 2px; margin-right: 2px; }
.gr3 { display: flex; justify-content: space-between; }
.gz { width: 31px; height: 30px; }
.gdown { margin-top: 10px; width: 46px; height: 20px; }
.gright { margin-left: 5px; width: 85px; flex: none; }
.gs1 { display: flex; justify-content: space-between; margin-top: 42px; }
.gs2 { display: flex; justify-content: space-between; margin-top: 11px; }
.gz2 { width: 31px; height: 30px; }
.gstack { width: 49px; display: flex; flex-direction: column; gap: 1px; }
.samp { height: 46px; padding: 5px 0 0 6px; }
.phase { height: 46px; padding: 8px 0 0 6px; }
.hscroll { display: flex; align-items: center; padding-left: 3px; width: 204px; height: 10px; }
.vthumb { display: flex; gap: 1px; align-items: center; justify-content: center; flex: none; width: 11px; height: 14px; margin-left: 4px; background: #bbb; border-radius: 4px; }
.vthumb i { display: block; width: 1px; height: 7px; background: #000; }
.rgt { margin-left: auto; margin-right: 4px; }
.phrow { margin-top: 4px; }
.stage { height: 290px; padding: 5px 0 0 6px; }
.padrow { display: flex; padding-left: 5px; height: 92px; }
.xy { display: grid; grid-template-columns: 29px 30px 30px; grid-template-rows: 30px 30px 30px; gap: 1px; width: 91px; }
.orb { width: 59px; height: 20px; margin: 5px 0 0 4px; justify-self: start; position: relative; }
.zero { font-size: 32px; font-weight: 500; line-height: 1; }
.zz { margin-left: 38px; display: grid; grid-template-columns: 30px 30px; grid-template-rows: 30px 30px 30px; gap: 1px 5px; }
.steps { display: flex; margin: 5px 0 0 4px; }
.stepa { width: 92px; display: flex; flex-direction: column; }
.stepb { margin-left: 38px; width: 65px; display: flex; flex-direction: column; }
.pos { width: 204px; height: 51px; margin-top: 5px; }
.xyrow { gap: 5px; letter-spacing: -.3px; }
.zrow { letter-spacing: -.3px; }
.vsep { width: 1px; height: 24px; background: #777; }
.posrow { margin-top: 6px; gap: 0; }
.homerow { margin-top: 5px; align-items: stretch; height: 50px; }
.hs { font-size: 15px; line-height: 12px; margin-left: 3px; }
.setcol { margin-left: 2px; display: flex; flex-direction: column; gap: 3px; padding-top: 1px; }
.setrow { display: flex; gap: 1px; height: 23px; }
.setrow .w10 { height: 23px; }
.setb { width: 42px; gap: 2px; }
.hm { width: 18px; height: 14px; }
.hmt { fill: #fff; font-size: 8px; font-weight: 700; text-anchor: middle; }
.devrow { margin-top: 6px; }
.acq { display: flex; align-items: flex-start; height: 16px; }
.acqh { width: 110px; border-radius: 3px 0 0 3px; }
.acqs { margin-left: 1px; margin-top: 1px; }
.scan { height: 226px; padding: 6px 0 0 5px; }
.r18 { height: 18px; }
.fr { height: 15px; }
.pathh { margin-top: 5px; }
.pm2 { width: 14px; height: 15px; font: bold 14px/1 "Liberation Sans", sans-serif; }
.dots { font-size: 11px; align-items: flex-end; padding-bottom: 2px; }
.shut { margin-top: 6px; height: 19px; }
.shb { justify-content: space-between; padding: 0 2px 0 3px; height: 19px; }
.tim { height: 76px; margin-top: 5px; }
.iw { display: flex; height: 31px; padding: 5px 0 0 6px; }
.iw .btn { height: 19px; gap: 2px; }
.tabs { display: flex; height: 20px; align-items: flex-end; position: relative; z-index: 1; letter-spacing: -.5px; }
.tab { display: block; height: 17px; background: #e9e9e9; border: 1px solid #999; border-bottom: 0; border-radius: 3px 3px 0 0; text-align: center; line-height: 15px; flex: none; }
.act { height: 21px; margin-bottom: -1px; background: #f0f0f0; line-height: 15px; padding-top: 1px; padding-bottom: 3px; }
.pane { display: flex; gap: 4px; height: 362px; padding: 2px 0 0 5px; border: 1px solid #8f8f8f; }
.card { background: #f0f0f0; border-radius: 3px; margin: 3px 0 0 4px; width: 206px; height: 33px; }
.lcard { width: 205px; }
.ctitle { text-align: center; font-weight: 700; font-size: 13px; line-height: 14px; padding-right: 32px; }
.cline { padding-left: 3px; margin-top: 2px; }
.prev { width: 30px; height: 15px; }
.slider { height: 6px; margin: 0 2px 0 3px; flex: none; border: 1px solid #999; border-radius: 3px; background: linear-gradient(#f5f5f5, #dcdcdc); }
.pm3 { width: 14px; height: 15px; margin-left: 2px; font: bold 15px/1 "Liberation Sans", sans-serif; }
.pmttop { display: flex; padding: 4px 4px 0 5px; }
.wrb { margin-left: auto; width: 17px; height: 17px; }
.pmtline { height: 1px; background: #555; margin: 2px 7px 0 9px; }
.log { display: flex; height: 68px; margin-top: 3px; border: 1px solid #8f8f8f; background: #f0f0f0; }
.logtext { flex: 1; line-height: 13px; padding-top: 1px; color: #111; letter-spacing: -.5px; }
.logbar { width: 15px; flex: none; background: #d9d9d9; display: flex; flex-direction: column; align-items: center; padding: 3px 0; }
.logthumb { margin-top: auto; margin-bottom: 3px; }
.status { display: flex; align-items: center; gap: 4px; height: 16px; margin-top: 8px; letter-spacing: -.45px; }
.err { width: 14px; height: 14px; margin-left: -1px; }
```
